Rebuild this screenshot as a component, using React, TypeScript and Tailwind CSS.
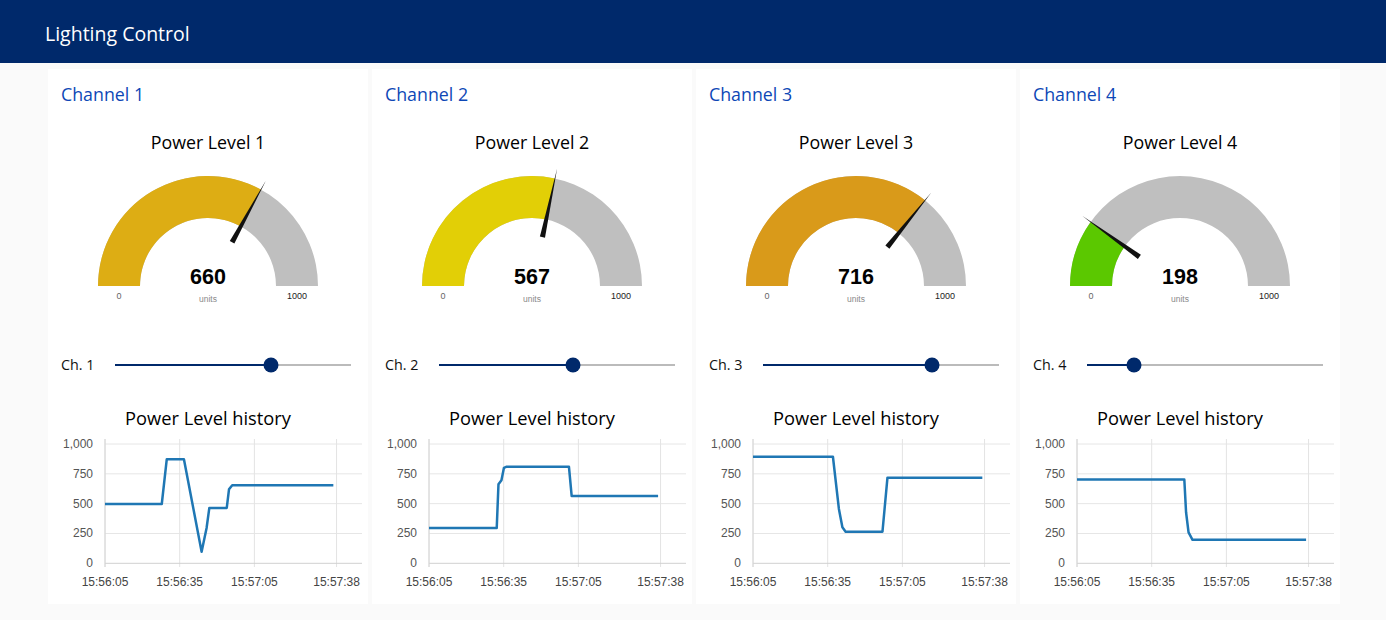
const channels = [
  {
    id: 1,
    value: 660,
    color: '#ddad14',
    history: [
      [0, 497], [22.8, 497], [24.8, 872], [31.7, 872], [38.8, 97], [40.8, 296],
      [41.9, 464], [48.9, 464], [49.8, 620], [51.1, 655], [91.7, 655],
    ],
  },
  {
    id: 2,
    value: 567,
    color: '#e2cf06',
    history: [
      [0, 296], [27.2, 296], [27.9, 662], [29.1, 696], [30.1, 800], [31.2, 810],
      [56.2, 810], [57.3, 564], [92, 564],
    ],
  },
  {
    id: 3,
    value: 716,
    color: '#d99a1a',
    history: [
      [0, 893], [32.1, 893], [34.5, 456], [35.9, 302], [37.2, 265], [52, 265],
      [54, 718], [92.1, 718],
    ],
  },
  {
    id: 4,
    value: 198,
    color: '#5bc800',
    history: [
      [0, 702], [43.1, 702], [43.8, 428], [44.8, 259], [46.4, 197], [92, 197],
    ],
  },
];

const SANS = { fontFamily: '"Segoe UI", "Open Sans", sans-serif' };
const ARIAL = '"Liberation Sans", Arial, sans-serif';

function Gauge({ value, color }: { value: number; color: string }) {
  const cx = 160;
  const cy = 132;
  const R = 110;
  const r = 68;
  const pt = (rad: number, a: number) => [cx + rad * Math.cos(a), cy - rad * Math.sin(a)];
  const a = Math.PI - (value / 1000) * Math.PI;
  const [ox, oy] = pt(R, a);
  const [ix, iy] = pt(r, a);

  // needle: wedge from r=50 to a point past the arc
  const perp = a + Math.PI / 2;
  const [bx, by] = pt(50, a);
  const [tx, ty] = pt(120, a);
  const w = 2.6;
  const n1 = [bx + w * Math.cos(perp), by - w * Math.sin(perp)];
  const n2 = [bx - w * Math.cos(perp), by + w * Math.sin(perp)];

  return (
    <svg width={320} height={160} className="block">
      <path
        d={`M ${cx - R} ${cy} A ${R} ${R} 0 0 1 ${cx + R} ${cy} L ${cx + r} ${cy} A ${r} ${r} 0 0 0 ${cx - r} ${cy} Z`}
        fill="#bfbfbf"
      />
      <path
        d={`M ${cx - R} ${cy} A ${R} ${R} 0 0 1 ${ox} ${oy} L ${ix} ${iy} A ${r} ${r} 0 0 0 ${cx - r} ${cy} Z`}
        fill={color}
      />
      <polygon points={`${n1[0]},${n1[1]} ${tx},${ty} ${n2[0]},${n2[1]}`} fill="#111" />
      <text x={cx} y={130} textAnchor="middle" fontSize={21.5} fontWeight={700} fill="#010101" fontFamily={ARIAL}>
        {value}
      </text>
      <text x={cx} y={148} textAnchor="middle" fontSize={8.5} fill="#8a8a8a" fontFamily={ARIAL}>
        units
      </text>
      <text x={cx - 89} y={145} textAnchor="middle" fontSize={9} fill="#666" fontFamily={ARIAL}>
        0
      </text>
      <text x={cx + 89} y={145} textAnchor="middle" fontSize={9} fill="#222" fontFamily={ARIAL}>
        1000
      </text>
    </svg>
  );
}

function HistoryChart({ points }: { points: number[][] }) {
  const x0 = 57;
  const x1 = 314;
  const pxPerSec = 2.49;
  const y = (v: number) => 133.3 - v * 0.1193;
  const x = (s: number) => x0 + s * pxPerSec;
  const ticks = [
    [0, '15:56:05'],
    [30, '15:56:35'],
    [60, '15:57:05'],
    [93, '15:57:38'],
  ] as const;

  return (
    <svg width={320} height={174} className="block">
      {[250, 500, 750, 1000].map((v) => (
        <line key={v} x1={x0} x2={x1} y1={y(v)} y2={y(v)} stroke="#e6e6e6" strokeWidth={1} />
      ))}
      {ticks.map(([s]) => (
        <line key={s} x1={x(s)} x2={x(s)} y1={9} y2={137} stroke="#e3e3e3" strokeWidth={1} />
      ))}
      <line x1={x0} x2={x1} y1={y(0)} y2={y(0)} stroke="#d0d0d0" strokeWidth={1} />
      <line x1={x0} x2={x0} y1={9} y2={137} stroke="#d6d6d6" strokeWidth={1} />
      {[0, 250, 500, 750, 1000].map((v) => (
        <text key={v} x={45} y={y(v) + 4} textAnchor="end" fontSize={12} fill="#555" fontFamily={ARIAL}>
          {v === 1000 ? '1,000' : v}
        </text>
      ))}
      {ticks.map(([s, label]) => (
        <text key={label} x={x(s)} y={156} textAnchor="middle" fontSize={12} fill="#444" fontFamily={ARIAL}>
          {label}
        </text>
      ))}
      <polyline
        points={points.map(([s, v]) => `${x(s)},${y(v)}`).join(' ')}
        fill="none"
        stroke="#1f77b4"
        strokeWidth={2.5}
        strokeLinejoin="round"
      />
    </svg>
  );
}

function ChannelCard({ ch }: { ch: (typeof channels)[number] }) {
  return (
    <div className="w-[320px] h-[535px] bg-white flex flex-col">
      {/* group title */}
      <div className="px-[13px] pt-[14px] text-[17.8px] leading-[22px] text-[#0d47b6]">Channel {ch.id}</div>

      {/* gauge */}
      <div className="mt-[25px] text-center text-[17.8px] leading-[24px] text-black">Power Level {ch.id}</div>
      <Gauge value={ch.value} color={ch.color} />

      {/* slider */}
      <div className="mt-[36px] h-[30px] px-[13px] flex items-center">
        <div className="w-[54px] text-[14.3px] text-[#111]">Ch. {ch.id}</div>
        <div className="relative w-[236px] h-[2px] bg-[#bbbbbb]">
          <div className="h-full bg-[#00296b]" style={{ width: `${(ch.value / 1000) * 100}%` }} />
          <div
            className="absolute top-1/2 w-[15px] h-[15px] -translate-x-1/2 -translate-y-1/2 rounded-full bg-[#00296b]"
            style={{ left: `${(ch.value / 1000) * 100}%` }}
          />
        </div>
      </div>

      {/* history chart */}
      <div className="mt-[26px] text-center text-[18.3px] leading-[24px] text-black">Power Level history</div>
      <HistoryChart points={ch.history} />
    </div>
  );
}

export default function App() {
  return (
    <div className="w-full h-[620px] overflow-hidden bg-[#fafafa]" style={SANS}>
      <div className="h-[63px] bg-[#00296b] flex items-center pl-[45px] pt-[4px]">
        <span className="text-[19.5px] text-white">Lighting Control</span>
      </div>
      <div className="flex gap-1 pl-[48px] pt-[6px]">
        {channels.map((ch) => (
          <ChannelCard key={ch.id} ch={ch} />
        ))}
      </div>
    </div>
  );
}
